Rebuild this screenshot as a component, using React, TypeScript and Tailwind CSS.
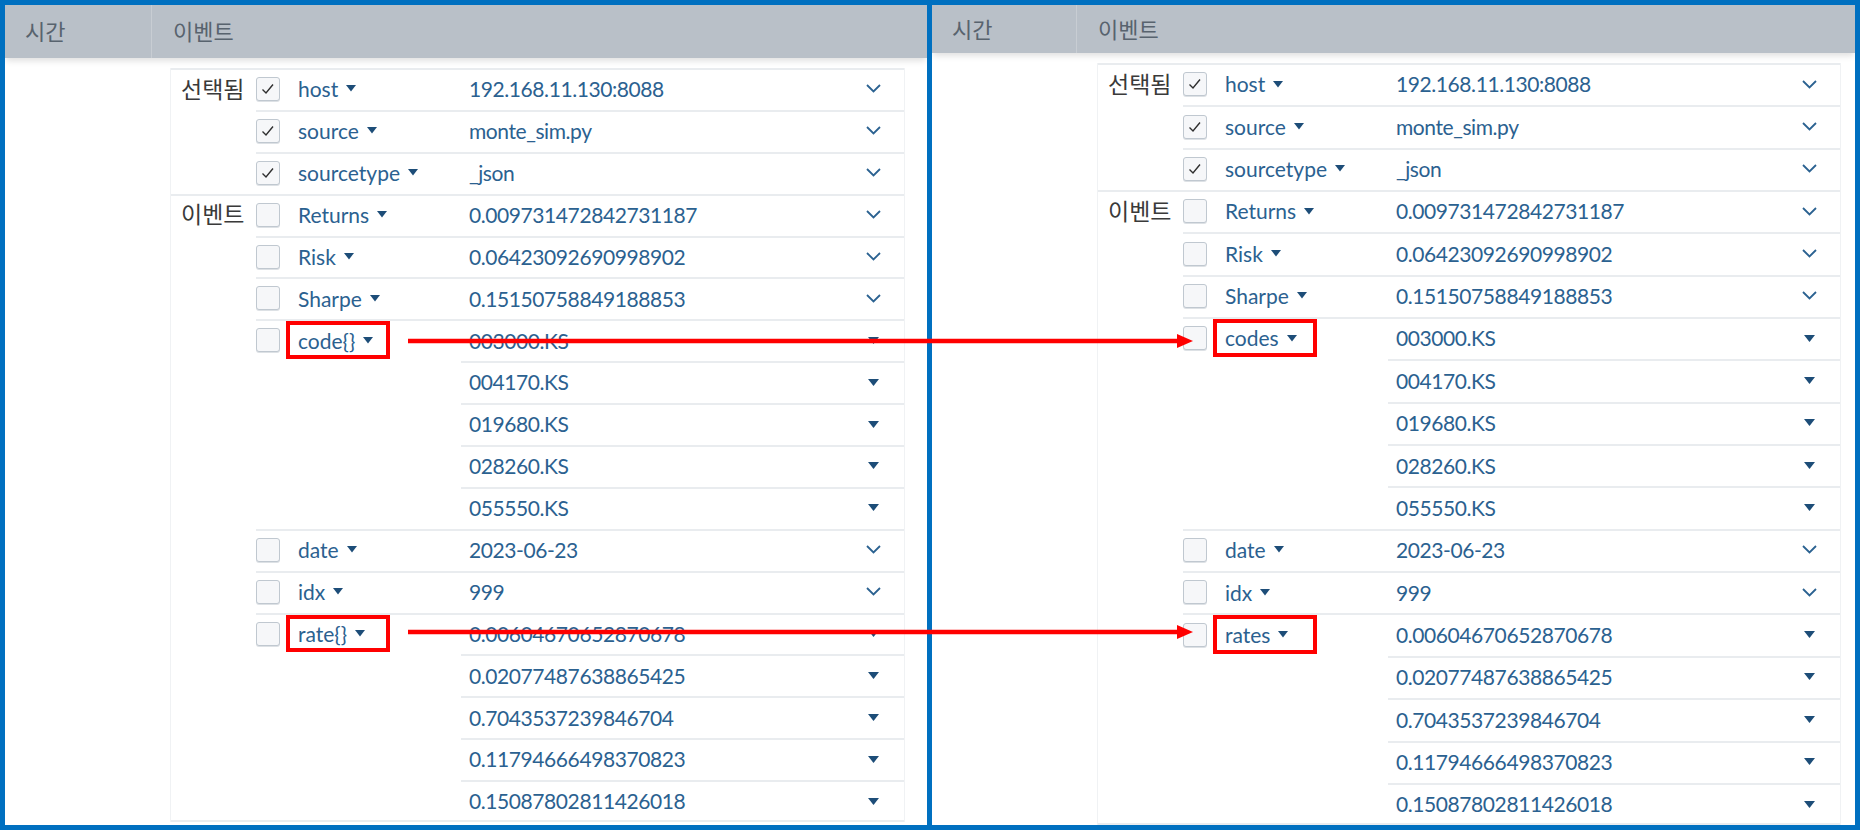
import React from "react";

type Field = { name: string; values: string[]; checked?: boolean; box?: boolean };

const codes = ["003000.KS", "004170.KS", "019680.KS", "028260.KS", "055550.KS"];
const rates = [
  "0.00604670652870678",
  "0.02077487638865425",
  "0.7043537239846704",
  "0.11794666498370823",
  "0.15087802811426018",
];

const selectedFields: Field[] = [
  { name: "host", values: ["192.168.11.130:8088"], checked: true },
  { name: "source", values: ["monte_sim.py"], checked: true },
  { name: "sourcetype", values: ["_json"], checked: true },
];

function eventFields(codeName: string, rateName: string): Field[] {
  return [
    { name: "Returns", values: ["0.009731472842731187"] },
    { name: "Risk", values: ["0.06423092690998902"] },
    { name: "Sharpe", values: ["0.15150758849188853"] },
    { name: codeName, values: codes, box: true },
    { name: "date", values: ["2023-06-23"] },
    { name: "idx", values: ["999"] },
    { name: rateName, values: rates, box: true },
  ];
}

function Checkbox({ checked }: { checked?: boolean }) {
  return (
    <div className="flex h-[24px] w-[24px] items-center justify-center rounded-[3px] border border-[#c0c8d0] bg-[#f6f7f9] shadow-[0_1px_0_#dde1e5]">
      {checked && (
        <svg width="18" height="18" viewBox="0 0 18 18">
          <path d="M3.5 9.5 L7 13 L14 4.5" fill="none" stroke="#2f2f2f" strokeWidth="1.4" />
        </svg>
      )}
    </div>
  );
}

function Caret() {
  return (
    <svg width="10" height="7" viewBox="0 0 10 7" className="ml-[8px] shrink-0">
      <path d="M0 0 H10 L5 6.5 Z" fill="#1d4d78" />
    </svg>
  );
}

function Chevron() {
  return (
    <svg width="15" height="9" viewBox="0 0 15 9">
      <path d="M1 1 L7.5 7.5 L14 1" fill="none" stroke="#2b6291" strokeWidth="1.8" />
    </svg>
  );
}

function Triangle() {
  return (
    <svg width="11" height="7" viewBox="0 0 11 7" className="mr-[2px]">
      <path d="M0 0 H11 L5.5 7 Z" fill="#1d4d78" />
    </svg>
  );
}

function FieldRow({ field, rowH }: { field: Field; rowH: string }) {
  const multi = field.values.length > 1;
  return (
    <div className="flex shadow-[inset_0_2px_0_#e9ecef]">
      <div className={`flex w-[42px] shrink-0 items-center ${rowH}`}>
        <Checkbox checked={field.checked} />
      </div>
      <div className={`relative flex w-[163px] shrink-0 items-center ${rowH}`}>
        <span>{field.name}</span>
        <Caret />
        {field.box && (
          <span className="absolute top-[2px] bottom-[2px] left-[-12px] w-[104px] border-4 border-[#ff0000]" />
        )}
      </div>
      <div className="flex-1">
        {field.values.map((v, i) => (
          <div
            key={v}
            className={`flex items-center justify-between pr-[23px] pl-[8px] ${rowH} ${
              i > 0 ? "shadow-[inset_0_2px_0_#e9ecef]" : ""
            }`}
          >
            <span className="tracking-[-0.02em]">{v}</span>
            {multi ? <Triangle /> : <Chevron />}
          </div>
        ))}
      </div>
    </div>
  );
}

function Section({ label, fields, rowH }: { label: string; fields: Field[]; rowH: string }) {
  return (
    <div className="flex shadow-[inset_0_2px_0_#e9ecef]">
      <div className={`flex w-[85px] shrink-0 items-center pl-[10px] text-[23px] text-[#3a3a3a] ${rowH}`}>
        {label}
      </div>
      <div className="flex-1">
        {fields.map((f) => (
          <FieldRow key={f.name} field={f} rowH={rowH} />
        ))}
      </div>
    </div>
  );
}

function Panel({
  codeName,
  rateName,
  headerH,
  timeW,
  rowH,
  tableMr,
  width,
}: {
  codeName: string;
  rateName: string;
  headerH: string;
  timeW: string;
  rowH: string;
  tableMr: string;
  width: string;
}) {
  return (
    <div className={`flex flex-col overflow-hidden bg-white ${width}`}>
      <div
        className={`relative z-10 flex shrink-0 bg-[#b9c0c8] text-[22px] text-[#58636e] shadow-[0_4px_6px_-1px_rgba(0,0,0,0.12)] ${headerH}`}
      >
        <div className={`flex items-center border-r border-[#c8cdd3] pl-[20px] ${timeW}`}>시간</div>
        <div className="flex items-center pl-[21px]">이벤트</div>
      </div>
      <div className="flex pt-[10px]">
        <div className="w-[165px] shrink-0" />
        <div
          className={`flex-1 border-x border-[#f0f2f4] text-[21px] text-[#2b6190] shadow-[inset_0_-2px_0_#e9ecef] ${tableMr}`}
        >
          <Section label="선택됨" fields={selectedFields} rowH={rowH} />
          <Section label="이벤트" fields={eventFields(codeName, rateName)} rowH={rowH} />
        </div>
      </div>
    </div>
  );
}

export default function App() {
  return (
    <div className="relative h-[830px] w-[1860px] font-['Lato','Noto_Sans_CJK_KR',sans-serif]">
      <div className="flex h-[830px] w-[1860px] border-[5px] border-[#0070c0] bg-white">
        <Panel
          codeName="code{}"
          rateName="rate{}"
          headerH="h-[53px]"
          timeW="w-[147px]"
          rowH="h-[41.9px]"
          tableMr="mr-[22px]"
          width="w-[922px]"
        />
        <div className="w-[5px] shrink-0 bg-[#0070c0]" />
        <Panel
          codeName="codes"
          rateName="rates"
          headerH="h-[48px]"
          timeW="w-[145px]"
          rowH="h-[42.35px]"
          tableMr="mr-[14px]"
          width="flex-1"
        />
      </div>
      <svg className="pointer-events-none absolute top-0 left-0" width="1860" height="830">
        <line x1="408" y1="341" x2="1180" y2="341" stroke="#ff0000" strokeWidth="4.5" />
        <polygon points="1177,334 1193,341 1177,348" fill="#ff0000" />
        <line x1="408" y1="632" x2="1180" y2="632" stroke="#ff0000" strokeWidth="4.5" />
        <polygon points="1177,625 1193,632 1177,639" fill="#ff0000" />
      </svg>
    </div>
  );
}
